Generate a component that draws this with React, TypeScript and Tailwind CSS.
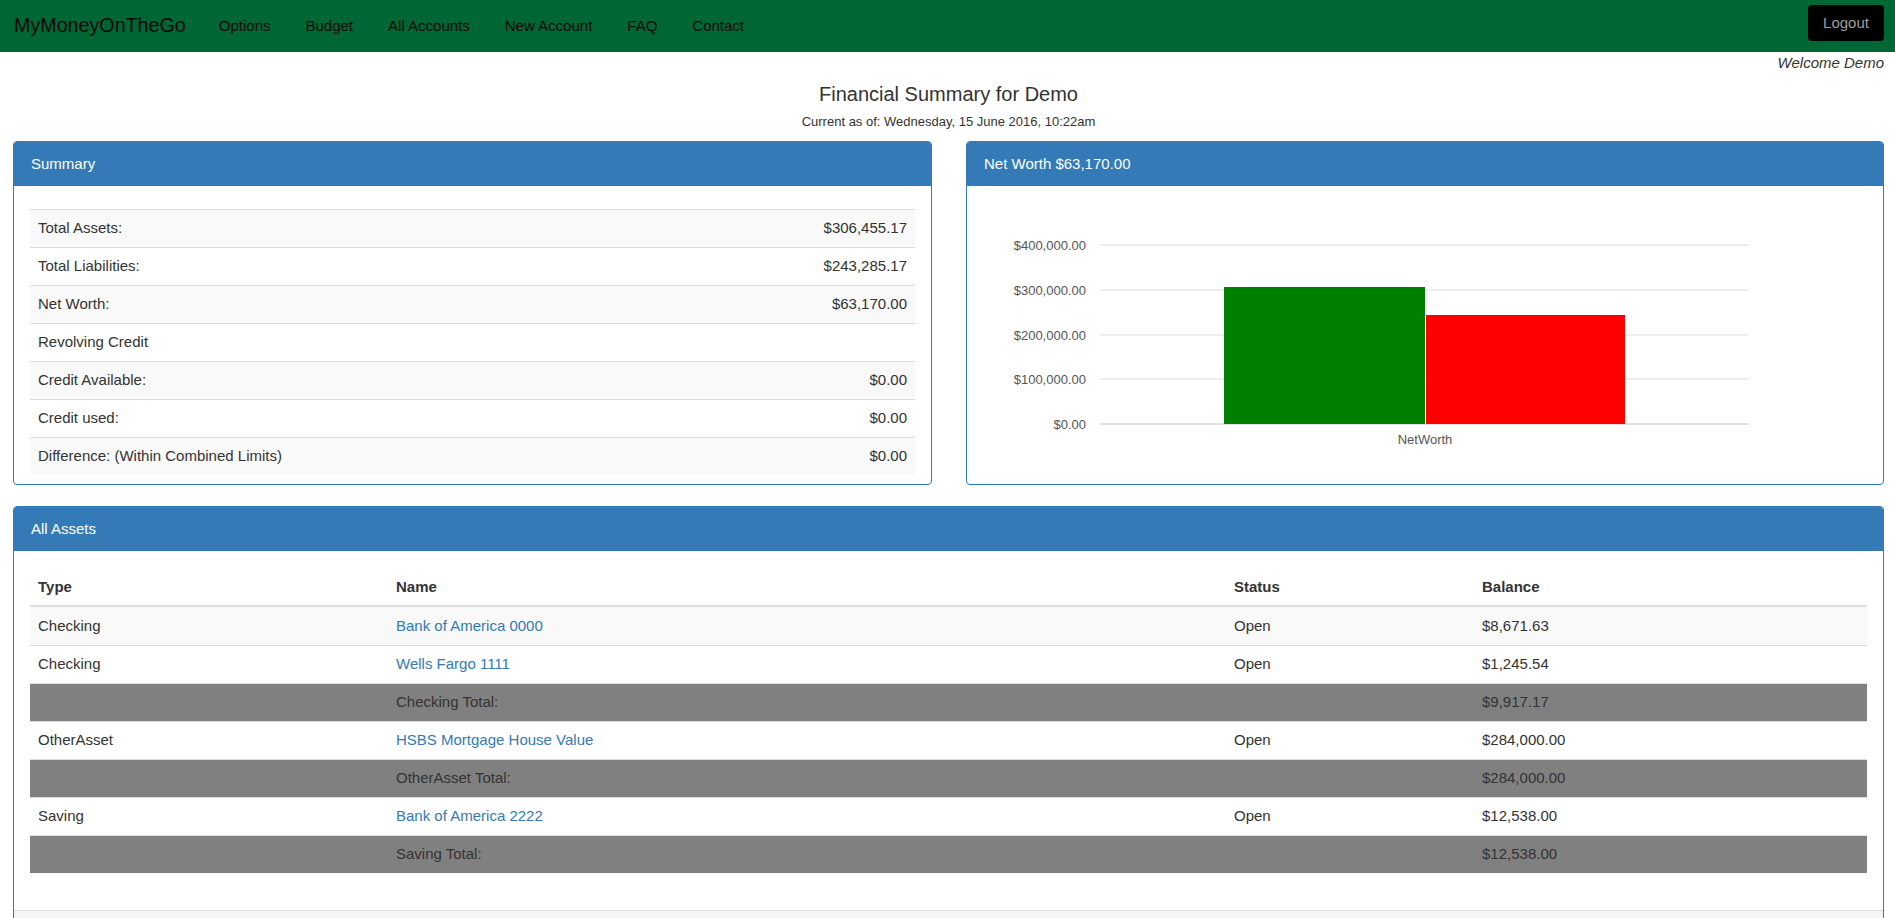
const navLinks = ['Options', 'Budget', 'All Accounts', 'New Account', 'FAQ', 'Contact'];

const summaryRows = [
  { label: 'Total Assets:', value: '$306,455.17' },
  { label: 'Total Liabilities:', value: '$243,285.17' },
  { label: 'Net Worth:', value: '$63,170.00' },
  { label: 'Revolving Credit', value: '' },
  { label: 'Credit Available:', value: '$0.00' },
  { label: 'Credit used:', value: '$0.00' },
  { label: 'Difference: (Within Combined Limits)', value: '$0.00' },
];

type AssetRow = {
  type: string;
  name: string;
  status: string;
  balance: string;
  total?: boolean;
};

const assetRows: AssetRow[] = [
  { type: 'Checking', name: 'Bank of America 0000', status: 'Open', balance: '$8,671.63' },
  { type: 'Checking', name: 'Wells Fargo 1111', status: 'Open', balance: '$1,245.54' },
  { type: '', name: 'Checking Total:', status: '', balance: '$9,917.17', total: true },
  { type: 'OtherAsset', name: 'HSBS Mortgage House Value', status: 'Open', balance: '$284,000.00' },
  { type: '', name: 'OtherAsset Total:', status: '', balance: '$284,000.00', total: true },
  { type: 'Saving', name: 'Bank of America 2222', status: 'Open', balance: '$12,538.00' },
  { type: '', name: 'Saving Total:', status: '', balance: '$12,538.00', total: true },
];

const ticks = [
  { y: 59, label: '$400,000.00' },
  { y: 104, label: '$300,000.00' },
  { y: 149, label: '$200,000.00' },
  { y: 193, label: '$100,000.00' },
  { y: 238, label: '$0.00' },
];

function PanelHeading({ title }: { title: string }) {
  return (
    <div className="h-[44px] flex items-center px-[17px] bg-[#337ab7] text-white text-[15px]">
      {title}
    </div>
  );
}

function NetWorthChart() {
  return (
    <svg width={916} height={298} className="block">
      {ticks.map((t, i) => (
        <g key={t.label}>
          <line
            x1={133}
            x2={782}
            y1={t.y}
            y2={t.y}
            stroke={i === ticks.length - 1 ? '#c4c4c4' : '#dcdcdc'}
            strokeWidth={1}
          />
          <text
            x={119}
            y={t.y + 4.5}
            textAnchor="end"
            fontSize={13}
            fill="#555"
            fontFamily="Liberation Sans, Arial, sans-serif"
          >
            {t.label}
          </text>
        </g>
      ))}
      <rect x={257} y={101} width={201} height={137} fill="#008000" />
      <rect x={459} y={129} width={199} height={109} fill="#ff0000" />
      <text
        x={458}
        y={258}
        textAnchor="middle"
        fontSize={13}
        fill="#555"
        fontFamily="Liberation Sans, Arial, sans-serif"
      >
        NetWorth
      </text>
    </svg>
  );
}

export default function App() {
  return (
    <div className="min-h-screen bg-white font-['Liberation_Sans',Arial,sans-serif] text-[15px] text-[#333]">
      {/* navbar */}
      <nav className="h-[52px] bg-[#006633] flex items-center pl-[14px] pr-[11px]">
        <span className="text-[19.7px] text-[#0a0a0a] pr-[15.5px]">MyMoneyOnTheGo</span>
        {navLinks.map((l) => (
          <a key={l} className="px-[17.5px] text-[15px] text-[#0a0a0a] cursor-pointer">
            {l}
          </a>
        ))}
        <button className="ml-auto self-start mt-[5px] h-[36px] w-[76px] rounded-[4px] bg-black text-[#9d9d9d] text-[15px]">
          Logout
        </button>
      </nav>

      <div className="pl-[13px] pr-[11px]">
        <div className="h-[22px] leading-[22px] text-right italic">Welcome Demo</div>

        <h4 className="mt-[6px] h-[28px] leading-[28px] text-center text-[20px]">
          Financial Summary for Demo
        </h4>
        <div className="mt-[5px] h-[18px] leading-[18px] text-center text-[13px]">
          Current as of: Wednesday, 15 June 2016, 10:22am
        </div>

        {/* top panels */}
        <div className="mt-[10px] flex gap-[34px]">
          <div className="w-[919px] border border-[#337ab7] rounded-[4px] overflow-hidden">
            <PanelHeading title="Summary" />
            <div className="px-[16px] pt-[23px] pb-[9px]">
              {summaryRows.map((r, i) => (
                <div
                  key={r.label}
                  className={`h-[38px] border-t border-[#ddd] flex items-center justify-between px-[8px] ${
                    i % 2 === 0 ? 'bg-[#f9f9f9]' : 'bg-white'
                  }`}
                >
                  <span>{r.label}</span>
                  <span>{r.value}</span>
                </div>
              ))}
            </div>
          </div>

          <div className="flex-1 border border-[#337ab7] rounded-[4px] overflow-hidden">
            <PanelHeading title="Net Worth $63,170.00" />
            <NetWorthChart />
          </div>
        </div>

        {/* all assets */}
        <div className="mt-[21px] border border-[#337ab7] rounded-[4px] overflow-hidden">
          <PanelHeading title="All Assets" />
          <div className="px-[16px] pt-[18px] pb-[37px]">
            <div className="grid grid-cols-[358px_838px_248px_1fr] h-[38px] items-center border-b-2 border-[#ddd] font-bold">
              <div className="px-[8px]">Type</div>
              <div className="px-[8px]">Name</div>
              <div className="px-[8px]">Status</div>
              <div className="px-[8px]">Balance</div>
            </div>
            {assetRows.map((r, i) => (
              <div
                key={r.name}
                className={`grid grid-cols-[358px_838px_248px_1fr] h-[38px] items-center ${
                  i === 0 ? '' : 'border-t border-[#ddd]'
                } ${r.total ? 'bg-[#808080]' : i % 2 === 0 ? 'bg-[#f9f9f9]' : 'bg-white'}`}
              >
                <div className="px-[8px]">{r.type}</div>
                <div className="px-[8px]">
                  {r.total ? r.name : <a className="text-[#337ab7] cursor-pointer">{r.name}</a>}
                </div>
                <div className="px-[8px]">{r.status}</div>
                <div className="px-[8px]">{r.balance}</div>
              </div>
            ))}
          </div>
          <div className="h-[41px] border-t border-[#ddd] bg-[#f5f5f5]" />
        </div>
      </div>
    </div>
  );
}
